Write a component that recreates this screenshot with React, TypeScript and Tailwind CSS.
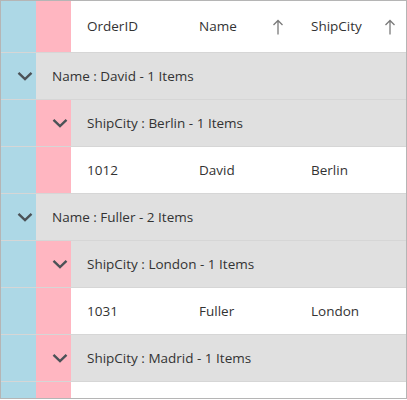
import React from "react";

type Row =
  | { kind: "g1"; text: string }
  | { kind: "g2"; text: string }
  | { kind: "data"; id: string; name: string; city: string };

const rows: Row[] = [
  { kind: "g1", text: "Name : David - 1 Items" },
  { kind: "g2", text: "ShipCity : Berlin - 1 Items" },
  { kind: "data", id: "1012", name: "David", city: "Berlin" },
  { kind: "g1", text: "Name : Fuller - 2 Items" },
  { kind: "g2", text: "ShipCity : London - 1 Items" },
  { kind: "data", id: "1031", name: "Fuller", city: "London" },
  { kind: "g2", text: "ShipCity : Madrid - 1 Items" },
  { kind: "data", id: "", name: "", city: "" },
];

function Chevron() {
  return (
    <svg width="16" height="10" viewBox="0 0 16 10" fill="none">
      <path d="M1.5 1.8 8 8 14.5 1.8" stroke="#4b5257" strokeWidth="2.4" />
    </svg>
  );
}

function SortUp() {
  return (
    <svg width="12" height="16" viewBox="0 0 12 16" fill="none">
      <path d="M6 1.5V15.5M1.5 6 6 1.5 10.5 6" stroke="#7a7a7a" strokeWidth="1.3" />
    </svg>
  );
}

function Cell({ children, sort }: { children?: React.ReactNode; sort?: boolean }) {
  return (
    <div className="flex w-[112px] shrink-0 items-center justify-between pl-4 pr-[11px]">
      <span>{children}</span>
      {sort && <SortUp />}
    </div>
  );
}

export default function App() {
  return (
    <div
      className="h-[399px] w-[407px] overflow-hidden border border-[#b5b5b5] bg-white text-[13.5px] text-[#333]"
      style={{ fontFamily: '"Open Sans", "Noto Sans", sans-serif' }}
    >
      {/* Header */}
      <div className="flex h-[52px] border-b border-[#d6d6d6]">
        <div className="w-[35px] shrink-0 bg-[#add8e6]" />
        <div className="w-[35px] shrink-0 bg-[#ffb6c1]" />
        <Cell>OrderID</Cell>
        <Cell sort>Name</Cell>
        <Cell sort>ShipCity</Cell>
      </div>

      {rows.map((r, i) => {
        if (r.kind === "g1") {
          return (
            <div key={i} className="flex h-[47px] border-b border-[#d6d6d6]">
              <div className="flex w-[35px] shrink-0 items-center justify-end bg-[#add8e6] pr-[3px]">
                <Chevron />
              </div>
              <div className="flex flex-1 items-center bg-[#e0e0e0] pl-4">{r.text}</div>
            </div>
          );
        }
        if (r.kind === "g2") {
          return (
            <div key={i} className="flex h-[47px] border-b border-[#d6d6d6]">
              <div className="w-[35px] shrink-0 bg-[#add8e6]" />
              <div className="flex w-[35px] shrink-0 items-center justify-end bg-[#ffb6c1] pr-[3px]">
                <Chevron />
              </div>
              <div className="flex flex-1 items-center bg-[#e0e0e0] pl-4">{r.text}</div>
            </div>
          );
        }
        return (
          <div key={i} className="flex h-[47px] border-b border-[#d6d6d6]">
            <div className="w-[35px] shrink-0 bg-[#add8e6]" />
            <div className="w-[35px] shrink-0 bg-[#ffb6c1]" />
            <Cell>{r.id}</Cell>
            <Cell>{r.name}</Cell>
            <Cell>{r.city}</Cell>
          </div>
        );
      })}
    </div>
  );
}
